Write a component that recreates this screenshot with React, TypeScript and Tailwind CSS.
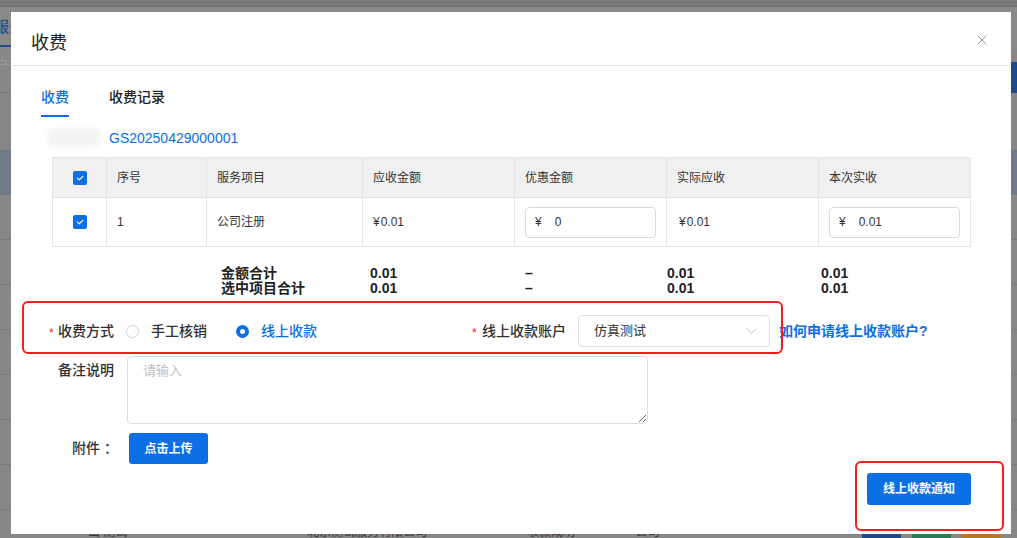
import React from 'react';

function Check() {
  return (
    <span className="flex h-[14px] w-[14px] items-center justify-center rounded-[2px] bg-[#0d6fe6]">
      <svg width="10" height="10" viewBox="0 0 10 10">
        <path d="M2.4 5.1 L4.3 6.9 L7.7 3.3" fill="none" stroke="white" strokeWidth="1.2" strokeLinecap="round" strokeLinejoin="round" />
      </svg>
    </span>
  );
}

function Background() {
  const rows = [0, 1, 2, 3, 4, 5, 6, 7];
  return (
    <div className="flex h-full w-full flex-col">
      <div className="h-[7px] shrink-0 border-b border-[#6c6c6c] bg-[#797979]" />
      <div className="flex h-[40px] shrink-0 items-end justify-between bg-[#8a8a8a]">
        <div className="-ml-[6px] border-b-2 border-[#1f4d8a] pb-[8px] text-[15px] font-medium leading-[20px] text-[#244f88]">服务</div>
      </div>
      <div className="flex h-[46px] shrink-0 items-start justify-between border-b border-[#7b7b7b] bg-[#878787]">
        <span className="-ml-[4px] mt-[9px] text-[12px] text-[#a0a0a0]">户名</span>
        <div className="-mr-[50px] mt-[15px] h-[31px] w-[60px] bg-[#1e4b88]" />
      </div>
      <div className="h-[57px] shrink-0 bg-[#868686]" />
      <div className="h-[45px] shrink-0 border-b border-[#767676] bg-[#6f7b8b]" />
      {rows.map((r) => (
        <div key={r} className="flex h-[45px] shrink-0 items-center border-b border-[#7a7a7a] bg-[#878787]">
          {r === 7 && (
            <div className="flex w-full items-center pr-[16px] text-[12px] text-[#333]">
              <span className="ml-[88px]">出 测试</span>
              <span className="ml-[180px]">北京测试服务有限公司</span>
              <span className="ml-[100px]">收款成功</span>
              <span className="ml-[60px]">公司</span>
              <span className="ml-auto h-[24px] w-[39px] bg-[#1e4b88]" />
              <span className="ml-[11px] h-[24px] w-[39px] bg-[#2a7a5a]" />
              <span className="ml-[11px] h-[24px] w-[39px] bg-[#b27a22]" />
            </div>
          )}
        </div>
      ))}
    </div>
  );
}

const cols = ['54px', '100px', '156px', '152px', '152px', '152px', '152px'];

export default function App() {
  return (
    <div className="relative h-[538px] w-[1017px] overflow-hidden bg-[#828282] font-['Liberation_Sans','Noto_Sans_CJK_SC',sans-serif] text-[#303133]">
      <Background />

      <div className="absolute left-[11px] top-[12px] flex h-[522px] w-[1000px] flex-col bg-white">
        {/* header */}
        <div className="flex h-[54px] shrink-0 items-start justify-between border-b border-[#e6e6e6] pl-[20px] pr-[24px]">
          <span className="mt-[19px] text-[18px] leading-[24px] text-[#222]">收费</span>
          <svg className="mt-[23px]" width="10" height="10" viewBox="0 0 10 10">
            <path d="M0.5 0.5 L9.5 9.5 M9.5 0.5 L0.5 9.5" stroke="#9a9a9a" strokeWidth="1" />
          </svg>
        </div>

        {/* tabs */}
        <div className="flex gap-[40px] pl-[30px]">
          <div className="flex flex-col pt-[21px]">
            <span className="text-[14px] font-medium leading-[20px] text-[#0d6fe6]">收费</span>
            <span className="mt-[8px] h-[2px] bg-[#0d6fe6]" />
          </div>
          <div className="flex flex-col pt-[21px]">
            <span className="text-[14px] font-medium leading-[20px] text-[#222]">收费记录</span>
          </div>
        </div>

        {/* order no */}
        <div className="mt-[11px] flex h-[20px] items-center pl-[37px]">
          <div className="h-[18px] w-[52px] bg-[#f3f3f3] blur-[2px]" />
          <span className="ml-[9px] text-[14px] leading-[20px] text-[#0d6fe6]">GS20250429000001</span>
        </div>

        {/* table */}
        <table className="ml-[41px] mt-[9px] w-[918px] table-fixed border-collapse text-[12px]">
          <colgroup>
            {cols.map((c, i) => (
              <col key={i} style={{ width: c }} />
            ))}
          </colgroup>
          <thead>
            <tr className="h-[40px] bg-[#f0f0f0] text-left">
              <th className="border border-[#e3e3e8] font-normal">
                <div className="flex justify-center"><Check /></div>
              </th>
              {['序号', '服务项目', '应收金额', '优惠金额', '实际应收', '本次实收'].map((t) => (
                <th key={t} className="border border-[#e3e3e8] pl-[10px] font-normal text-[#333]">{t}</th>
              ))}
            </tr>
          </thead>
          <tbody>
            <tr className="h-[49px] text-[#333]">
              <td className="border border-[#e3e3e8]">
                <div className="flex justify-center"><Check /></div>
              </td>
              <td className="border border-[#e3e3e8] pl-[10px]">1</td>
              <td className="border border-[#e3e3e8] pl-[10px]">公司注册</td>
              <td className="border border-[#e3e3e8] pl-[10px]">¥<span className="ml-[1px]">0.01</span></td>
              <td className="border border-[#e3e3e8] pl-[10px]">
                <div className="flex h-[31px] w-[131px] items-center rounded-[4px] border border-[#d9d9de] pl-[9px]">
                  <span>¥</span>
                  <span className="ml-[13px]">0</span>
                </div>
              </td>
              <td className="border border-[#e3e3e8] pl-[12px]">¥<span className="ml-[1px]">0.01</span></td>
              <td className="border border-[#e3e3e8] pl-[10px]">
                <div className="flex h-[31px] w-[131px] items-center rounded-[4px] border border-[#d9d9de] pl-[9px]">
                  <span>¥</span>
                  <span className="ml-[13px]">0.01</span>
                </div>
              </td>
            </tr>
          </tbody>
        </table>

        {/* totals */}
        <div className="ml-[41px] mt-[19px] grid grid-cols-[54px_100px_156px_152px_152px_152px_152px] text-[14px] font-semibold leading-[15px] text-[#222]">
          <div />
          <div />
          <div className="flex flex-col pl-[15px]">
            <span>金额合计</span>
            <span>选中项目合计</span>
          </div>
          <div className="flex flex-col pl-[8px]">
            <span>0.01</span>
            <span>0.01</span>
          </div>
          <div className="flex flex-col pl-[11px]">
            <span>–</span>
            <span>–</span>
          </div>
          <div className="flex flex-col pl-[1px]">
            <span>0.01</span>
            <span>0.01</span>
          </div>
          <div className="flex flex-col pl-[3px]">
            <span>0.01</span>
            <span>0.01</span>
          </div>
        </div>

        {/* payment method */}
        <div className="mt-[19px] flex h-[32px] items-center pl-[38px] text-[14px] font-medium">
          <span className="mt-[4px] w-[9px] text-[12px] text-[#f5222d]">*</span>
          <span className="text-[#303133]">收费方式</span>
          <span className="ml-[12px] h-[13px] w-[13px] rounded-full border border-[#cfd2d8] bg-white" />
          <span className="ml-[12px] text-[#303133]">手工核销</span>
          <span className="ml-[29px] flex h-[13px] w-[13px] items-center justify-center rounded-full bg-[#0d6fe6]">
            <span className="h-[5px] w-[5px] rounded-full bg-white" />
          </span>
          <span className="ml-[12px] text-[#0d6fe6]">线上收款</span>
          <span className="ml-[155px] mt-[4px] w-[10px] text-[12px] text-[#f5222d]">*</span>
          <span className="text-[#303133]">线上收款账户</span>
          <div className="ml-[12px] flex h-[32px] w-[192px] items-center justify-between rounded-[4px] border border-[#dcdfe6] pl-[15px] pr-[12px] text-[13px] font-normal text-[#333]">
            <span>仿真测试</span>
            <svg width="11" height="6" viewBox="0 0 11 6">
              <path d="M0.5 0.5 L5.5 5.3 L10.5 0.5" fill="none" stroke="#c0c4cc" strokeWidth="1" />
            </svg>
          </div>
          <span className="ml-[9px] font-semibold text-[#0d6fe6]">如何申请线上收款账户?</span>
        </div>

        {/* remark */}
        <div className="mt-[9px] flex pl-[38px]">
          <span className="w-[65px] pt-[4px] text-right text-[14px] font-medium leading-[20px] text-[#303133]">备注说明</span>
          <textarea
            className="ml-[13px] h-[68px] w-[521px] rounded-[4px] border border-[#dcdfe6] px-[15px] py-[4px] text-[13px] leading-[20px] outline-none placeholder:text-[#bdbdbd]"
            placeholder="请输入"
          />
        </div>

        {/* attachment */}
        <div className="mt-[9px] flex items-center pl-[38px]">
          <span className="w-[69px] text-right text-[14px] font-medium text-[#303133]">附件 ：</span>
          <div className="ml-[11px] flex h-[31px] w-[79px] items-center justify-center rounded-[3px] bg-[#0d6fe6] text-[12px] font-semibold text-white">
            点击上传
          </div>
        </div>

        {/* footer button */}
        <div className="mr-[40px] mt-[9px] flex h-[32px] w-[104px] items-center justify-center self-end rounded-[3px] bg-[#0d6fe6] text-[12px] font-semibold text-white">
          线上收款通知
        </div>
      </div>

      {/* annotation boxes */}
      <div className="pointer-events-none absolute left-[22px] top-[301px] h-[53px] w-[761px] rounded-[6px] border-2 border-[#f21d1d]" />
      <div className="pointer-events-none absolute left-[855px] top-[461px] h-[70px] w-[149px] rounded-[6px] border-2 border-[#f21d1d]" />
    </div>
  );
}
